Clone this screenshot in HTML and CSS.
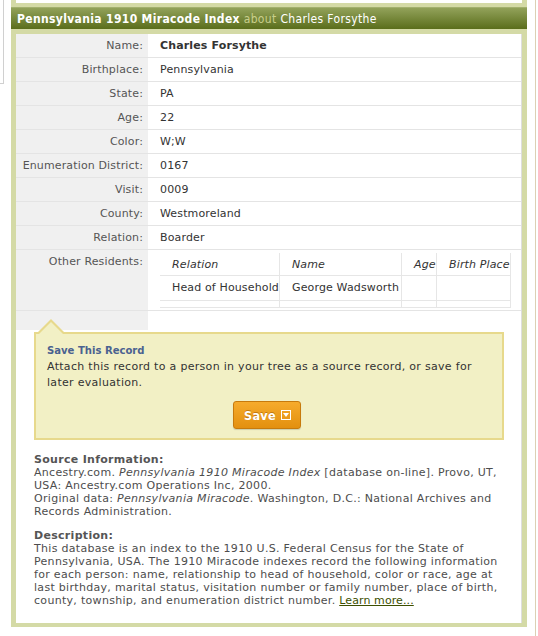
FILE: index.html
```html
<!DOCTYPE html>
<html>
<head>
<meta charset="utf-8">
<title>Pennsylvania 1910 Miracode Index</title>
<link rel="stylesheet" href="styles.css">
</head>
<body>
<div class="edge-left"></div>
<div class="frame">
  <div class="frame-top"></div>
  <h1 class="title"><b>Pennsylvania 1910 Miracode Index</b> <span class="about">about</span> Charles Forsythe</h1>
  <div class="content">
    <div class="details">
      <div class="lbl">Name:</div><div class="val name">Charles Forsythe</div>
      <div class="lbl">Birthplace:</div><div class="val">Pennsylvania</div>
      <div class="lbl">State:</div><div class="val">PA</div>
      <div class="lbl">Age:</div><div class="val">22</div>
      <div class="lbl">Color:</div><div class="val">W;W</div>
      <div class="lbl">Enumeration District:</div><div class="val">0167</div>
      <div class="lbl">Visit:</div><div class="val">0009</div>
      <div class="lbl">County:</div><div class="val">Westmoreland</div>
      <div class="lbl">Relation:</div><div class="val">Boarder</div>
      <div class="lbl tall">Other Residents:</div>
      <div class="val tall others">
        <table class="residents">
          <thead>
            <tr><th class="c1">Relation</th><th class="c2">Name</th><th class="c3">Age</th><th class="c4">Birth Place</th></tr>
          </thead>
          <tbody>
            <tr><td>Head of Household</td><td>George Wadsworth</td><td></td><td></td></tr>
            <tr class="empty"><td></td><td></td><td></td><td></td></tr>
          </tbody>
        </table>
      </div>
      <div class="lbl spacer"></div><div class="val spacer"></div>
    </div>

    <div class="callout">
      <h2 class="callout-title">Save This Record</h2>
      <p class="callout-text">Attach this record to a person in your tree as a source record, or save for later evaluation.</p>
      <div class="callout-actions">
        <button class="save-btn">Save <span class="drop"><svg width="8" height="8" viewBox="0 0 8 8"><path d="M1 2 L7 2 L4 6 Z" fill="#fff"/></svg></span></button>
      </div>
    </div>

    <div class="source">
      <h3 class="source-title">Source Information:</h3>
      <p class="source-text">Ancestry.com. <i>Pennsylvania 1910 Miracode Index</i> [database on-line]. Provo, UT, USA: Ancestry.com Operations Inc, 2000.<br>Original data: <i>Pennsylvania Miracode</i>. Washington, D.C.: National Archives and Records Administration.</p>
      <h3 class="source-title desc">Description:</h3>
      <p class="source-text">This database is an index to the 1910 U.S. Federal Census for the State of Pennsylvania, USA. The 1910 Miracode indexes record the following information for each person: name, relationship to head of household, color or race, age at last birthday, marital status, visitation number or family number, place of birth, county, township, and enumeration district number. <a href="#" class="more">Learn more...</a></p>
    </div>
  </div>
</div>
<div class="edge-right"></div>
</body>
</html>
```
FILE: styles.css
```css
html, body {
  margin: 0;
  padding: 0;
  background: #fff;
}
body {
  display: flex;
  align-items: flex-start;
  height: 636px;
  overflow: hidden;
  font-family: "DejaVu Sans", Verdana, sans-serif;
  font-size: 11px;
  color: #333;
}
.edge-left {
  width: 3px;
  height: 83px;
  border-right: 1px solid #d0d0d0;
  border-bottom: 1px solid #d0d0d0;
  flex: none;
}
.frame {
  margin-left: 7px;
  width: 516px;
  background: #d4daa6;
  padding-bottom: 4px;
  flex: none;
}
.frame-top {
  height: 3px;
  margin: 0 5px;
  background: #fff;
}
.title {
  margin: 4px 0 0;
  height: 22px;
  line-height: 22px;
  padding-left: 6px;
  background: linear-gradient(#92a25a, #5a6d1b);
  border-top: 1px solid #a3b06e;
  box-sizing: border-box;
  font-family: "DejaVu Sans Condensed", Tahoma, sans-serif;
  font-size: 12px;
  font-weight: normal;
  letter-spacing: 0.35px;
  color: #fff;
  white-space: nowrap;
}
.title b { font-weight: bold; }
.title .about { color: #c9cf8c; }
.content {
  margin: 5px 5px 0;
  background: #fff;
  border-right: 1px solid #dedede;
  padding-bottom: 16px;
}
.details {
  display: grid;
  grid-template-columns: 132px 1fr;
  letter-spacing: 0.14px;
}
.lbl, .val {
  height: 23px;
  line-height: 24px;
  border-bottom: 1px solid #e4e4e4;
  white-space: nowrap;
}
.lbl {
  background: #f0f0f0;
  color: #555;
  text-align: right;
  padding-right: 5px;
}
.val {
  padding-left: 12px;
  color: #333;
}
.val.name {
  font-weight: bold;
}
.lbl.tall, .val.tall {
  box-sizing: border-box;
  height: 61px;
}
.val.others {
  padding-top: 3px;
}
.lbl.spacer, .val.spacer {
  height: 19px;
  border-bottom: none;
}
.val.spacer { background: #fff; }
.residents {
  border-collapse: collapse;
  table-layout: fixed;
  width: 350px;
}
.residents th, .residents td {
  text-align: left;
  padding: 0 0 0 12px;
  border-right: 1px solid #e6e6e6;
  border-bottom: 1px solid #e6e6e6;
  white-space: nowrap;
  overflow: visible;
  color: #333;
}
.residents th {
  font-style: italic;
  font-weight: normal;
  height: 20px;
  line-height: 20px;
  padding-top: 2px;
}
.residents td {
  height: 23px;
  line-height: 24px;
}
.residents th.c1 { width: 107px; }
.residents th.c2 { width: 109px; }
.residents th.c3 { width: 22px; }
.residents th.c4 { width: 61px; }
.residents tr.empty td {
  height: 6px;
  line-height: 6px;
}
.callout {
  position: relative;
  margin: 2px 17px 0 18px;
  background: #f2f0c5;
  border: 2px solid #e7d98c;
  padding: 9px 11px 9px;
}
.callout::before {
  content: "";
  position: absolute;
  left: 0;
  top: -15px;
  width: 0;
  height: 0;
  border-left: 15px solid transparent;
  border-right: 15px solid transparent;
  border-bottom: 15px solid #e7d98c;
}
.callout::after {
  content: "";
  position: absolute;
  left: 2px;
  top: -12px;
  width: 0;
  height: 0;
  border-left: 13px solid transparent;
  border-right: 13px solid transparent;
  border-bottom: 13px solid #f2f0c5;
}
.callout-title {
  margin: 0;
  font-family: "DejaVu Sans Condensed", Tahoma, sans-serif;
  font-size: 11.2px;
  font-weight: bold;
  color: #4a6290;
  line-height: 16px;
}
.callout-text {
  margin: 0;
  line-height: 16px;
  letter-spacing: 0.3px;
  color: #333;
}
.callout-actions {
  display: flex;
  justify-content: center;
  margin-top: 10px;
}
.save-btn {
  display: flex;
  align-items: center;
  gap: 5px;
  height: 28px;
  padding: 0 9px 0 10px;
  margin-left: -4px;
  border: 1px solid #c77a0c;
  border-radius: 3px;
  background: linear-gradient(#f6ab2c, #e3900f);
  box-shadow: 0 1px 1px rgba(0,0,0,0.15);
  font-family: "DejaVu Sans Condensed", Tahoma, sans-serif;
  font-size: 12.5px;
  font-weight: bold;
  letter-spacing: 0.3px;
  color: #fff;
  text-shadow: 0 -1px 0 rgba(150,80,0,0.5);
  cursor: pointer;
}
.drop {
  display: flex;
  align-items: center;
  justify-content: center;
  width: 8px;
  height: 8px;
  border: 1px solid #fff;
}
.source {
  margin: 13px 18px 0;
  color: #4d4d4d;
  letter-spacing: 0.3px;
}
.source-title {
  margin: 0;
  font-size: 11px;
  font-weight: bold;
  line-height: 13px;
  color: #555;
}
.source-title.desc {
  margin-top: 11px;
}
.source-text {
  margin: 0;
  line-height: 13px;
}
.more {
  color: #3d4f00;
  text-decoration: underline;
  letter-spacing: 0.1px;
}
.edge-right {
  margin-left: 8px;
  width: 1px;
  height: 636px;
  background: #dcd0b4;
  flex: none;
}
```
